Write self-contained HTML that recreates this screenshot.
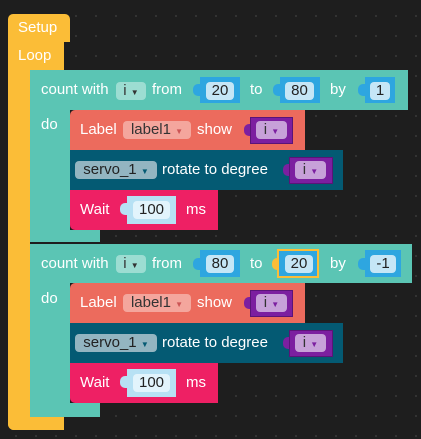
<!DOCTYPE html><html><head><style>
*{margin:0;padding:0;box-sizing:border-box}
body{width:421px;height:439px;background:#1e1e1e;background-image:radial-gradient(#3a3a3a 0.8px,transparent 1px);background-size:20px 20px;background-position:6px 6px;position:relative;overflow:hidden;font-family:"Liberation Sans",sans-serif;color:#fff;font-size:15px}
div{position:absolute}
.t{white-space:nowrap;line-height:16px}
.y{background:#fbbd37}
.g{background:#5bc5b4}
.r{background:#ec6b5d}
.s{background:#045a73}
.p{background:#ee2064}
.f{border-radius:4px;color:#222;text-align:center;line-height:18px;height:18px;white-space:nowrap}
.bl{background:#2ea6e0}
.pu{background:#7c1fa0;border:1px solid #5a1478}
.in{background:#c5e6f6}
.nub{width:8px;height:12px;border-radius:5px 0 0 5px}
</style></head><body>
<div class="y" style="left:8px;top:14px;width:62px;height:28px;border-radius:5px 5px 0 0"></div>
<div class="t" style="left:18px;top:20px">Setup</div>
<div class="y" style="left:8px;top:42px;width:56px;height:28px"></div>
<div class="y" style="left:8px;top:42px;width:22px;height:388px;border-radius:0 0 0 6px"></div>
<div class="y" style="left:8px;top:417px;width:56px;height:13px;border-radius:0 0 0 6px"></div>
<div class="t" style="left:18px;top:48px">Loop</div>

<div class="g" style="left:30px;top:70px;width:378px;height:40px;border-radius:4px 0 0 0"></div>
<div class="g" style="left:30px;top:70px;width:40px;height:172px"></div>
<div class="g" style="left:30px;top:230px;width:70px;height:12px;border-radius:0 0 0 4px"></div>
<div class="t" style="left:41px;top:82px">count with</div>
<div class="f" style="left:116px;top:82px;width:30px;background:#9cddd2;color:#333">i <span style="font-size:8px">▼</span></div>
<div class="t" style="left:152px;top:82px">from</div>
<div class="bl nub" style="left:193px;top:84px"></div>
<div class="bl" style="left:200px;top:77px;width:40px;height:26px"></div>
<div class="f in" style="left:206px;top:82px;width:28px">20</div>
<div class="t" style="left:250px;top:82px">to</div>
<div class="bl nub" style="left:273px;top:84px"></div>
<div class="bl" style="left:280px;top:77px;width:40px;height:26px"></div>
<div class="f in" style="left:285px;top:82px;width:29px">80</div>
<div class="t" style="left:330px;top:82px">by</div>
<div class="bl nub" style="left:358px;top:84px"></div>
<div class="bl" style="left:365px;top:77px;width:30px;height:26px"></div>
<div class="f in" style="left:370px;top:82px;width:20px">1</div>
<div class="t" style="left:41px;top:117px">do</div>

<div class="r" style="left:70px;top:110px;width:235px;height:40px;border-radius:5px 0 0 0"></div>
<div class="t" style="left:80px;top:122px">Label</div>
<div class="f" style="left:123px;top:121px;width:68px;background:#f4a69d;color:#333">label1 <span style="font-size:8px;color:#c55">▼</span></div>
<div class="t" style="left:197px;top:122px">show</div>
<div class="pu nub" style="left:244px;top:124px;background:#7c1fa0;border:0"></div>
<div class="pu" style="left:250px;top:117px;width:43px;height:27px"></div>
<div class="f" style="left:256px;top:121px;width:31px;background:#c7a1d9;color:#333">i <span style="font-size:8px;color:#7c1fa0">▼</span></div>

<div class="s" style="left:70px;top:150px;width:273px;height:40px"></div>
<div class="f" style="left:75px;top:161px;width:82px;background:#93b5c1;color:#222">servo_1 <span style="font-size:8px;color:#045a73">▼</span></div>
<div class="t" style="left:162px;top:162px">rotate to degree</div>
<div class="pu nub" style="left:283px;top:164px;border:0"></div>
<div class="pu" style="left:289px;top:157px;width:44px;height:27px"></div>
<div class="f" style="left:295px;top:161px;width:31px;background:#c7a1d9;color:#333">i <span style="font-size:8px;color:#7c1fa0">▼</span></div>

<div class="p" style="left:70px;top:190px;width:148px;height:40px;border-radius:0 0 0 5px"></div>
<div class="t" style="left:80px;top:202px">Wait</div>
<div class="nub" style="left:120px;top:203px;background:#b7e1f4"></div>
<div style="left:127px;top:196px;width:49px;height:28px;background:#b7e1f4"></div>
<div class="f" style="left:133px;top:201px;width:37px;background:#e2f4fc">100</div>
<div class="t" style="left:186px;top:202px">ms</div>

<div class="g" style="left:30px;top:244px;width:382px;height:39px;border-radius:4px 0 0 0"></div>
<div class="g" style="left:30px;top:244px;width:40px;height:173px"></div>
<div class="g" style="left:30px;top:403px;width:70px;height:14px;border-radius:0 0 0 4px"></div>
<div class="t" style="left:41px;top:256px">count with</div>
<div class="f" style="left:116px;top:255px;width:30px;background:#9cddd2;color:#333">i <span style="font-size:8px">▼</span></div>
<div class="t" style="left:152px;top:256px">from</div>
<div class="bl nub" style="left:193px;top:258px"></div>
<div class="bl" style="left:200px;top:250px;width:40px;height:27px"></div>
<div class="f in" style="left:206px;top:255px;width:28px">80</div>
<div class="t" style="left:250px;top:256px">to</div>
<div class="nub" style="left:272px;top:258px;background:#fbbd37"></div>
<div class="bl" style="left:277px;top:249px;width:42px;height:29px;border:2px solid #fbbd37"></div>
<div class="f in" style="left:285px;top:255px;width:28px">20</div>
<div class="t" style="left:330px;top:256px">by</div>
<div class="bl nub" style="left:358px;top:258px"></div>
<div class="bl" style="left:365px;top:250px;width:36px;height:27px"></div>
<div class="f in" style="left:370px;top:255px;width:26px">-1</div>
<div class="t" style="left:41px;top:291px">do</div>

<div class="r" style="left:70px;top:283px;width:235px;height:40px;border-radius:5px 0 0 0"></div>
<div class="t" style="left:80px;top:295px">Label</div>
<div class="f" style="left:123px;top:294px;width:68px;background:#f4a69d;color:#333">label1 <span style="font-size:8px;color:#c55">▼</span></div>
<div class="t" style="left:197px;top:295px">show</div>
<div class="pu nub" style="left:244px;top:297px;border:0"></div>
<div class="pu" style="left:250px;top:290px;width:43px;height:27px"></div>
<div class="f" style="left:256px;top:294px;width:31px;background:#c7a1d9;color:#333">i <span style="font-size:8px;color:#7c1fa0">▼</span></div>

<div class="s" style="left:70px;top:323px;width:273px;height:40px"></div>
<div class="f" style="left:75px;top:334px;width:82px;background:#93b5c1;color:#222">servo_1 <span style="font-size:8px;color:#045a73">▼</span></div>
<div class="t" style="left:162px;top:335px">rotate to degree</div>
<div class="pu nub" style="left:283px;top:337px;border:0"></div>
<div class="pu" style="left:289px;top:330px;width:44px;height:27px"></div>
<div class="f" style="left:295px;top:334px;width:31px;background:#c7a1d9;color:#333">i <span style="font-size:8px;color:#7c1fa0">▼</span></div>

<div class="p" style="left:70px;top:363px;width:148px;height:40px;border-radius:0 0 0 5px"></div>
<div class="t" style="left:80px;top:375px">Wait</div>
<div class="nub" style="left:120px;top:376px;background:#b7e1f4"></div>
<div style="left:127px;top:369px;width:49px;height:28px;background:#b7e1f4"></div>
<div class="f" style="left:133px;top:374px;width:37px;background:#e2f4fc">100</div>
<div class="t" style="left:186px;top:375px">ms</div>
</body></html>
